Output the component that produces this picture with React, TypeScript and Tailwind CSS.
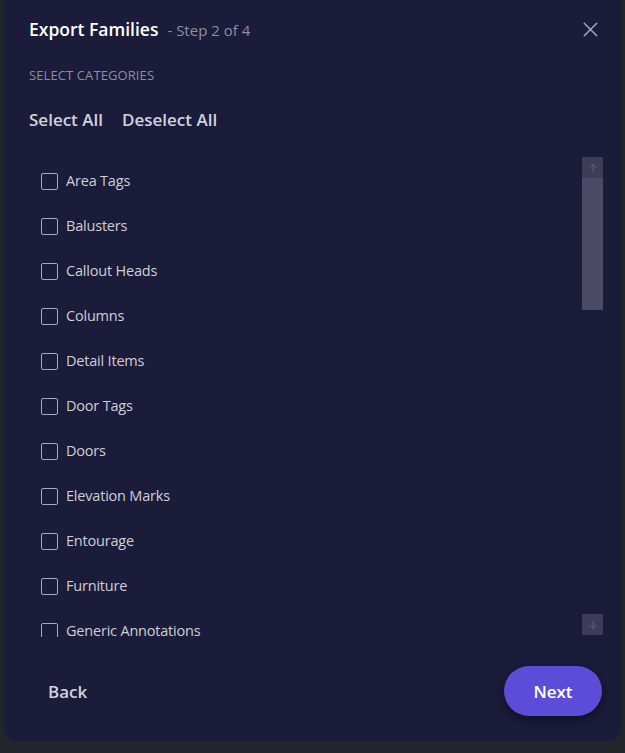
import { X, ArrowUp, ArrowDown } from "lucide-react";

const categories = [
  "Area Tags",
  "Balusters",
  "Callout Heads",
  "Columns",
  "Detail Items",
  "Door Tags",
  "Doors",
  "Elevation Marks",
  "Entourage",
  "Furniture",
  "Generic Annotations",
];

function CategoryRow({ label }: { label: string }) {
  return (
    <label className="flex h-[45px] shrink-0 items-center gap-[8px] pl-[12px]">
      <span className="h-[17px] w-[17px] rounded-[2px] border-[1.5px] border-[#a9a9b8]" />
      <span className="text-[14.5px] tracking-[-0.2px] text-[#cfcfd8]">{label}</span>
    </label>
  );
}

export default function App() {
  return (
    <div
      className="h-[753px] w-[625px] bg-[#22262c] pl-[4px]"
      style={{ fontFamily: '"Open Sans", "Noto Sans", sans-serif' }}
    >
      <div className="flex h-[741px] w-[618px] flex-col rounded-b-[14px] bg-[#1b1b3a] pl-[25px] pr-[18px]">
        <div className="flex items-center justify-between pt-[16px]">
          <div className="flex items-baseline gap-[9px]">
            <h2 className="text-[17.5px] font-semibold text-white">Export Families</h2>
            <span className="text-[15px] text-[#8e8ea2]">- Step 2 of 4</span>
          </div>
          <button className="mr-[1px] text-[#a6a6b4]" aria-label="Close">
            <X className="h-[25px] w-[25px]" strokeWidth={1.4} />
          </button>
        </div>

        <div className="mt-[24px] text-[13px] tracking-[0.1px] text-[#8e8ea2]">SELECT CATEGORIES</div>

        <div className="mt-[21px] flex gap-[19px] text-[17px] font-semibold text-[#d2d2dc]">
          <button>Select All</button>
          <button>Deselect All</button>
        </div>

        <div className="mt-[25px] flex h-[480px] gap-[4px]">
          <div className="flex flex-1 flex-col overflow-hidden pt-[1.5px]">
            {categories.map((c) => (
              <CategoryRow key={c} label={c} />
            ))}
          </div>
          <div className="mr-[1px] flex w-[21px] flex-col">
            <div className="flex h-[21px] items-center justify-center bg-[#3d3d58] text-[#60607a]">
              <ArrowUp className="h-[12px] w-[12px]" strokeWidth={2} />
            </div>
            <div className="h-[132px] bg-[#4a4a66]" />
            <div className="flex-1" />
            <div className="mb-[2px] flex h-[21px] items-center justify-center bg-[#3d3d58] text-[#60607a]">
              <ArrowDown className="h-[12px] w-[12px]" strokeWidth={2} />
            </div>
          </div>
        </div>

        <div className="mt-[29px] flex items-center justify-between">
          <button className="pl-[19px] text-[17px] font-semibold text-[#d2d2dc]">Back</button>
          <button className="mr-[2px] h-[50px] w-[98px] rounded-full bg-[#5d4cd8] text-[17px] font-semibold text-white shadow-[0_3px_8px_rgba(0,0,0,0.45)]">
            Next
          </button>
        </div>
      </div>
    </div>
  );
}
